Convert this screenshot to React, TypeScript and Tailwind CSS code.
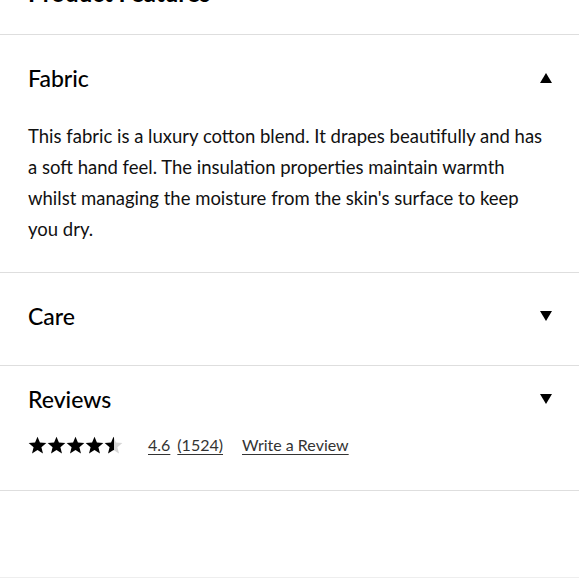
import React, { useState } from 'react';

const Star = ({ fill }: { fill: 'full' | 'half' }) => (
  <svg width="19" height="18" viewBox="0 0 24 23" className="block">
    <defs>
      <linearGradient id="half-star">
        <stop offset="55%" stopColor="#000" />
        <stop offset="55%" stopColor="#d6d6d6" />
      </linearGradient>
    </defs>
    <path
      d="M12 0.8l3.1 7.6 8.2 0.6-6.3 5.3 2 8-7-4.4-7 4.4 2-8L0.7 9l8.2-0.6z"
      fill={fill === 'full' ? '#000' : 'url(#half-star)'}
    />
  </svg>
);

const Caret = ({ open }: { open: boolean }) => (
  <svg width="12" height="10" viewBox="0 0 12 10" className={open ? '' : 'rotate-180'}>
    <path d="M6 0L12 10H0z" fill="#000" />
  </svg>
);

export default function App() {
  const [open, setOpen] = useState<Record<string, boolean>>({ fabric: true, care: false, reviews: false });
  const toggle = (k: string) => setOpen({ ...open, [k]: !open[k] });

  return (
    <div className="bg-white text-black font-['Lato','Liberation_Sans',sans-serif] w-[579px] h-[580px] overflow-hidden">
      <div className="-mt-[23px] px-7 pb-[25px] border-b border-[#dedede]">
        <h2 className="text-[24px] leading-[32px] font-bold">Product Features</h2>
      </div>

      <div className="px-7 pt-[25px] pb-[27px] border-b border-[#dedede]">
        <button onClick={() => toggle('fabric')} className="w-full flex items-center justify-between h-[36px]">
          <span className="text-[23px] font-medium">Fabric</span>
          <span className="mr-[-1px]"><Caret open={true} /></span>
        </button>
        <p className="mt-[25px] text-[18.5px] leading-[31px] text-[#111]">
          This fabric is a luxury cotton blend. It drapes beautifully and has a soft hand feel. The insulation properties maintain warmth whilst managing the moisture from the skin's surface to keep you dry.
        </p>
      </div>

      <div className="px-7 pt-[25px] pb-[31px] border-b border-[#dedede]">
        <button onClick={() => toggle('care')} className="w-full flex items-center justify-between h-[36px]">
          <span className="text-[23px] font-medium">Care</span>
          <span className="mr-[-1px]"><Caret open={false} /></span>
        </button>
      </div>

      <div className="px-7 pt-[15px] pb-[31px] border-b border-[#dedede]">
        <button onClick={() => toggle('reviews')} className="w-full flex items-center justify-between h-[36px]">
          <span className="text-[23px] font-medium">Reviews</span>
          <span className="mr-[-1px]"><Caret open={false} /></span>
        </button>
        <div className="mt-[14px] flex items-center h-[28px] text-[16px] text-[#333]">
          <div className="flex items-center">
            <Star fill="full" />
            <Star fill="full" />
            <Star fill="full" />
            <Star fill="full" />
            <Star fill="half" />
          </div>
          <a href="#" className="ml-[25px] underline underline-offset-[3px]">4.6</a>
          <a href="#" className="ml-[7px] underline underline-offset-[3px]">(1524)</a>
          <a href="#" className="ml-[19px] underline underline-offset-[3px]">Write a Review</a>
        </div>
      </div>

      <div className="h-[87px] border-b border-[#eeeeee]" />
    </div>
  );
}
